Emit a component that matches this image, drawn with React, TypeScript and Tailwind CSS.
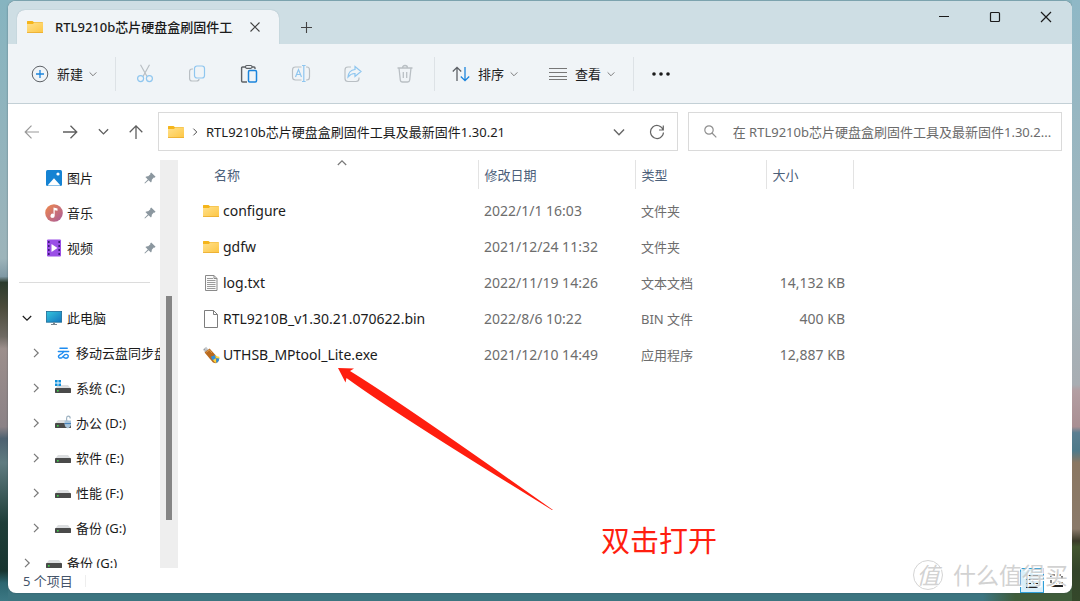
import React, { useState } from 'react';

interface FileItem {
  name: string;
  date: string;
  type: string;
  size: string;
  icon: 'folder' | 'text' | 'blank' | 'usb';
}

const FILES: FileItem[] = [
  { name: 'configure', date: '2022/1/1 16:03', type: '文件夹', size: '', icon: 'folder' },
  { name: 'gdfw', date: '2021/12/24 11:32', type: '文件夹', size: '', icon: 'folder' },
  { name: 'log.txt', date: '2022/11/19 14:26', type: '文本文档', size: '14,132 KB', icon: 'text' },
  { name: 'RTL9210B_v1.30.21.070622.bin', date: '2022/8/6 10:22', type: 'BIN 文件', size: '400 KB', icon: 'blank' },
  { name: 'UTHSB_MPtool_Lite.exe', date: '2021/12/10 14:49', type: '应用程序', size: '12,887 KB', icon: 'usb' },
];

const DRIVES = [
  { name: '移动云盘同步盘', icon: 'cloud' },
  { name: '系统 (C:)', icon: 'system' },
  { name: '办公 (D:)', icon: 'locked' },
  { name: '软件 (E:)', icon: 'drive' },
  { name: '性能 (F:)', icon: 'drive' },
  { name: '备份 (G:)', icon: 'drive' },
];

const FolderIcon = () => (
  <svg width="16" height="16" viewBox="0 0 16 16" className="shrink-0">
    <defs>
      <linearGradient id="folder" x1="0" y1="0" x2="1" y2="1">
        <stop offset="0" stopColor="#ffe08a" />
        <stop offset="1" stopColor="#fdc643" />
      </linearGradient>
    </defs>
    <path d="M0 2.5Q0 2 .5 2H5.5L7 3.3H15.5Q16 3.3 16 4V8H0Z" fill="#f5b51b" />
    <path d="M0 5H5.8L7 4H16V13.5Q16 14 15.5 14H.5Q0 14 0 13.5Z" fill="url(#folder)" />
    <path d="M0 13.2H16V13.5Q16 14 15.5 14H.5Q0 14 0 13.5Z" fill="#e9ab2c" />
  </svg>
);

const FileIcon = ({ kind }: { kind: FileItem['icon'] }) => {
  if (kind === 'folder') return <FolderIcon />;
  if (kind === 'usb') {
    return (
      <svg width="18" height="18" viewBox="0 0 18 18" className="shrink-0">
        <path d="M.8 3.5 4.2.8 7 4.4 3.6 7.2Z" fill="#c4c8cc" />
        <path d="M2.2 3.6l.9-.7M3.5 5.1l.9-.7" stroke="#777" strokeWidth=".8" />
        <path d="M2.6 6.6 7.6 2.5 17 13Q17 15.8 13.6 17.2L11 16.6Z" fill="#b96a1e" />
        <path d="M4.2 6.4 7.4 4 10 7" fill="none" stroke="#dd9a4b" />
        <path d="M9 10.4Q11.4 10.4 13 8.800L14 12.2 11 14.400Q9.200 12.6 9 10.400Z" fill="#2f8fdc" />
        <path d="M13 8.800Q14.600 10.800 17.400 10.800L17.400 13 14 12.500ZM11 14 13.800 12.300 14.600 17.200Q12.400 16.800 11 14Z" fill="#ffd53e" />
        <path d="M14 12.300 17.400 12.600Q17.200 15.600 14.600 17.200Z" fill="#2f8fdc" />
      </svg>
    );
  }
  return (
    <svg width="16" height="18" viewBox="0 0 16 18" className="shrink-0">
      {kind === 'text' ? (
        <>
          <path d="M2.5 1.5H11L14 4.5V16.5H2.5Z" fill="#fafafa" stroke="#8a8a8a" />
          <path d="M11 1.5V4.5H14" fill="none" stroke="#8a8a8a" />
          <path d="M4 4.5h6M4 6.5h8.5M4 8.5h8.5M4 10.5h8.5M4 12.5h8.5M4 14.5h8.5" stroke="#9b9b9b" />
        </>
      ) : (
        <>
          <path d="M1.5.5H10.5L14.5 4.5V17.5H1.5Z" fill="#fff" stroke="#7d7d7d" />
          <path d="M10.5.5V4.5H14.5" fill="none" stroke="#7d7d7d" />
        </>
      )}
    </svg>
  );
};

const DriveIcon = ({ kind }: { kind: string }) => {
  if (kind === 'cloud') {
    return (
      <svg width="16" height="16" viewBox="0 0 16 16" className="shrink-0" fill="none" stroke="#1e8cf0" strokeLinecap="round">
        <path d="M5 3.2H12.200" strokeWidth="1.500" />
        <path d="M3.400 6.400H13.600" strokeWidth="1.500" />
        <path d="M8.600 6.600Q7 9.200 4.800 9.800Q2.800 11 3.800 12.400Q5 13.600 7 12.600Q8.800 11 9.600 9.800Q12.200 8.600 13.200 10.600Q13.600 13 10.800 13.200Q8.800 13 8 11.400" strokeWidth="1.400" />
      </svg>
    );
  }
  return (
    <svg width="16" height="16" viewBox="0 0 16 16" className="shrink-0">
      <path d="M3 5H13L15.8 8.600H.2Z" fill="#dcdee0" />
      <rect x="0" y="8" width="16" height="5" rx=".4" fill="#4a4a4a" />
      <rect x="2" y="10" width="1.600" height="1.600" fill="#3fd44b" />
      {kind === 'system' && <path d="M0 0H2.6V2.6H0ZM3.4 0H6V2.6H3.4ZM0 3.4H2.6V6H0ZM3.4 3.4H6V6H3.4Z" fill="#1090dc" />}
      {kind === 'locked' && (
        <>
          <path d="M11.6 6V3Q11.8 1.2 13.4 1.2Q15.2 1.2 15.2 3.4" fill="none" stroke="#9fb3c2" strokeWidth="1.2" />
          <path d="M9.6 5.6H16V10Q15.4 12.6 12.8 13.4Q10 12.4 9.6 10Z" fill="#a9c4da" />
          <path d="M9.6 8.6H16" stroke="#3f7db8" />
        </>
      )}
    </svg>
  );
};

const Chevron = ({ d, className, size = 10 }: { d: 'down' | 'right' | 'up'; className: string; size?: number }) => (
  <svg width={size} height={size} viewBox="0 0 10 10" className={`shrink-0 ${className}`} fill="none" stroke="currentColor" strokeWidth="1.2">
    <path d={d === 'down' ? 'M.8 3 5 7.2 9.2 3' : d === 'up' ? 'M.8 7 5 2.8 9.2 7' : 'M3 .8 7.2 5 3 9.2'} />
  </svg>
);

const PinIcon = () => (
  <svg width="12" height="12" viewBox="0 0 12 12" className="shrink-0" fill="#8b979f">
    <path d="M7.2.4 11.6 4.8 10.4 5.8 9.8 5.6 7.8 7.8Q8 9.4 7 10.6L4.6 8.2 1 11.6.4 11 3.8 7.4 1.4 5Q2.6 4 4.2 4.2L6.4 2.2 6.2 1.6Z" />
  </svg>
);

const toolIcons = [
  {
    label: '剪切',
    art: (
      <g stroke="#b9bfc4">
        <path d="M5.5.8 12 12.5M14.5.8 8 12.5" />
        <circle cx="5.6" cy="14.6" r="3" stroke="#8fc6ef" />
        <circle cx="14.4" cy="14.6" r="3" stroke="#8fc6ef" />
      </g>
    ),
  },
  {
    label: '复制',
    art: (
      <>
        <path d="M6 5H5Q2.600 5 2.600 7.500V14.500Q2.600 17 5 17H9.500Q12 17 12 15" stroke="#b9bfc4" />
        <rect x="7.500" y="2" width="10" height="12" rx="2.500" stroke="#8fc6ef" />
      </>
    ),
  },
  {
    label: '粘贴',
    art: (
      <>
        <path d="M6.500 3H3.600Q2.600 3 2.600 4V17Q2.600 18 3.600 18H8M13 3H15Q16 3 16 4V5" stroke="#5d6166" strokeWidth="1.400" />
        <rect x="6.500" y="1.500" width="6.500" height="2.800" rx="1.200" stroke="#5d6166" />
        <rect x="9.500" y="6.500" width="8" height="11.500" rx="1.200" stroke="#1b84dc" strokeWidth="1.500" />
      </>
    ),
  },
  {
    label: '重命名',
    art: (
      <>
        <path d="M10.500 3H4.500Q1.500 3 1.500 6V13Q1.500 16 4.500 16H10.500M15 3H16Q18.500 3 18.500 6V13Q18.500 16 16 16H15" stroke="#b9bfc4" />
        <path d="M4.500 13 7.500 5.500 10.500 13M5.500 10.500H9.500M12.800 1.500V17.500M11 1.500H14.600M11 17.500H14.600" stroke="#8fc6ef" />
      </>
    ),
  },
  {
    label: '共享',
    art: (
      <>
        <path d="M8 3H5Q2 3 2 6V14.500Q2 17.500 5 17.500H13Q16 17.500 16 14.500V13.500" stroke="#b9bfc4" />
        <path d="M12 2.500 18 7.500 12 12.500V9.500Q8 9.300 5 13Q5.500 6.300 12 5.500Z" stroke="#8fc6ef" />
      </>
    ),
  },
  {
    label: '删除',
    art: (
      <g stroke="#b9bfc4" strokeWidth="1.300">
        <path d="M2.500 4H17.500M7.500 4Q7.500 1.500 10 1.500T12.500 4M4 4 5.300 16Q5.500 18 7.500 18H12.500Q14.500 18 14.700 16L16 4M8.300 8V14M11.700 8V14" />
      </g>
    ),
  },
];

const TH = 'border-r border-[#e3e3e3] px-1.5 text-left font-normal';

export default function App() {
  const [query, setQuery] = useState('');

  return (
    <div className="relative flex h-screen overflow-hidden bg-[linear-gradient(to_bottom,#8ab5c1_50%,transparent_50%),linear-gradient(to_right,#3c7580_91%,#3f5c3a_94%)] font-['Noto_Sans','Noto_Sans_CJK_SC',sans-serif] text-[13px] leading-5 text-[#1b1b1b]">
      <div className="w-2 shrink-0 bg-[linear-gradient(to_bottom,#86b4c0_0%,#9db4ba_43%,#7f99a5_46%,#2b3a2c_47%,#4a4a3a_51%,#6f6a63_56%,#9c8f8c_58%,#8b8286_71%,#4d6170_73%,#5f7b80_77%,#1f3d38_87%,#183530_95%,#2d6670_97%,#3c7884_100%)]" />

      <div className="flex min-w-0 flex-1 flex-col pt-px pb-2">
        <div className="flex min-h-0 flex-1 flex-col overflow-hidden rounded-lg bg-white shadow-[0_0_2px_#33485099]">
          {/* title bar */}
          <header className="flex h-[43px] shrink-0 items-end bg-[#cedee4] pl-[9px]">
            <div className="flex h-[34px] w-[262px] items-center rounded-t-lg bg-[#f0f4f7] pr-4 pl-2.5 shadow-[0_0_1px_#8aa5b0]">
              <FolderIcon />
              <span className="ml-3 w-[178px] overflow-hidden font-medium whitespace-nowrap">RTL9210b芯片硬盘盒刷固件工具</span>
              <button aria-label="关闭标签页" className="ml-auto flex size-4 items-center justify-center">
                <svg width="10" height="10" viewBox="0 0 10 10" stroke="#444" strokeWidth="1.1"><path d="M.5.5 9.500 9.500M9.500.5.5 9.500" /></svg>
              </button>
            </div>
            <button aria-label="新建标签页" className="ml-[17px] flex h-[34px] w-5 items-center justify-center">
              <svg width="11" height="11" viewBox="0 0 11 11" stroke="#444" strokeWidth="1.1"><path d="M5.500 0V11M0 5.500H11" /></svg>
            </button>
            <div className="ml-auto flex self-start pr-px">
              {[
                ['最小化', 'M1 5.500H11'],
                ['最大化', 'M2.500 1.500H9.500Q10.500 1.500 10.500 2.500V9.500Q10.500 10.500 9.500 10.500H2.500Q1.500 10.500 1.500 9.500V2.500Q1.500 1.500 2.500 1.500Z'],
                ['关闭', 'M1 1 11 11M11 1 1 11'],
              ].map(([label, path]) => (
                <button key={label} aria-label={label} className="flex h-[31px] w-[51px] items-center justify-center">
                  <svg width="12" height="12" viewBox="0 0 12 12" fill="none" stroke="#1b1b1b" strokeWidth="1.200"><path d={path} /></svg>
                </button>
              ))}
            </div>
          </header>

          {/* command bar */}
          <div className="flex h-[60px] shrink-0 items-center border-b border-[#c3d0d6] bg-[#f0f4f7]">
            <button className="flex h-9 w-[107px] items-center pl-[23px]">
              <svg width="18" height="18" viewBox="0 0 18 18" fill="none" stroke="#5d6166">
                <circle cx="9" cy="9" r="7.800" />
                <path d="M9 5V13M5 9H13" stroke="#1b84dc" strokeWidth="1.300" />
              </svg>
              <span className="ml-2">新建</span>
              <Chevron d="down" size={8} className="ml-1.5 text-[#777]" />
            </button>
            <div className="mr-[3px] h-[34px] w-px bg-[#dde2e6]" />
            {toolIcons.map(tool => (
              <button key={tool.label} aria-label={tool.label} className="flex h-9 w-[52px] items-center justify-center">
                <svg width="20" height="20" viewBox="0 0 20 20" fill="none" strokeWidth="1.200">{tool.art}</svg>
              </button>
            ))}
            <div className="ml-[3px] h-[34px] w-px bg-[#dde2e6]" />
            <button className="flex h-9 w-[99px] items-center pl-[17px]">
              <svg width="18" height="18" viewBox="0 0 18 18" fill="none" strokeWidth="1.300">
                <path d="M5 16V2.500M.8 6.500 5 2.300 9.200 6.500" stroke="#5d6166" />
                <path d="M13 2V15.500M8.800 11.500 13 15.700 17.200 11.500" stroke="#1b84dc" />
              </svg>
              <span className="ml-2">排序</span>
              <Chevron d="down" size={8} className="ml-1.5 text-[#777]" />
            </button>
            <button className="flex h-9 w-[99px] items-center pl-[15px]">
              <svg width="18" height="18" viewBox="0 0 18 18" stroke="#777" strokeWidth="1.200"><path d="M0 3.500H18M0 7.500H18M0 11.500H18M0 14.500H18" /></svg>
              <span className="ml-2">查看</span>
              <Chevron d="down" size={8} className="ml-1.5 text-[#777]" />
            </button>
            <div className="h-[34px] w-px bg-[#dde2e6]" />
            <button aria-label="更多" className="flex h-9 w-[54px] items-center justify-center">
              <svg width="18" height="4" viewBox="0 0 18 4" fill="#1b1b1b"><circle cx="2" cy="2" r="1.800" /><circle cx="9" cy="2" r="1.800" /><circle cx="16" cy="2" r="1.800" /></svg>
            </button>
          </div>

          {/* navigation */}
          <div className="flex h-[55px] shrink-0 items-center pr-2.5">
            <div className="flex w-[150px] shrink-0 items-center pl-4 text-[#5f5f5f]">
              <button aria-label="后退" className="text-[#999]">
                <svg width="15" height="14" viewBox="0 0 15 14" fill="none" stroke="currentColor" strokeWidth="1.200"><path d="M15 7H1M7.500.7 1.200 7 7.500 13.300" /></svg>
              </button>
              <button aria-label="前进" className="ml-6">
                <svg width="15" height="14" viewBox="0 0 15 14" fill="none" stroke="currentColor" strokeWidth="1.300"><path d="M0 7H14M7.500.7 13.800 7 7.500 13.300" /></svg>
              </button>
              <button aria-label="最近浏览的位置" className="ml-5"><Chevron d="down" size={11} className="text-[#5f5f5f]" /></button>
              <button aria-label="向上" className="ml-5">
                <svg width="14" height="14" viewBox="0 0 14 14" fill="none" stroke="currentColor" strokeWidth="1.300"><path d="M7 14V1M.7 7.200 7 .9 13.300 7.200" /></svg>
              </button>
            </div>
            <div className="flex h-[39px] min-w-0 flex-[520] items-center border border-[#dadada] pr-3 pl-[9px]">
              <FolderIcon />
              <Chevron d="right" size={8} className="mx-[7px] text-[#444]" />
              <button className="truncate">RTL9210b芯片硬盘盒刷固件工具及最新固件1.30.21</button>
              <button aria-label="上一个位置" className="ml-auto"><Chevron d="down" size={12} className="text-[#666]" /></button>
              <button aria-label="刷新" className="ml-6">
                <svg width="16" height="16" viewBox="0 0 16 16" fill="none" stroke="#666" strokeWidth="1.200"><path d="M14.200 6A6.500 6.500 0 1 0 14.500 8.500M14.300 1.500V6H10" /></svg>
              </button>
            </div>
            <label className="ml-2.5 flex h-[39px] min-w-0 flex-[374] items-center border border-[#dadada] pl-[15px]">
              <svg width="13" height="13" viewBox="0 0 13 13" fill="none" stroke="#8f8f8f" strokeWidth="1.200"><circle cx="5" cy="5" r="4.200" /><path d="M8 8 12.300 12.300" /></svg>
              <input
                type="text"
                aria-label="搜索"
                value={query}
                onChange={e => setQuery(e.target.value)}
                placeholder="在 RTL9210b芯片硬盘盒刷固件工具及最新固件1.30.2..."
                className="ml-4 min-w-0 flex-1 outline-none placeholder:text-[#6b6b6b]"
              />
            </label>
          </div>

          <div className="flex min-h-0 flex-1 pt-px">
            {/* sidebar */}
            <nav className="w-[152px] shrink-0 overflow-hidden whitespace-nowrap text-[#1b1b1b]">
              <a href="#pictures" className="flex h-[35px] items-center pr-1 pl-[38px]">
                <svg width="16" height="16" viewBox="0 0 16 16"><rect width="16" height="16" rx="1.500" fill="#1583d3" /><path d="M1.500 15.500 8 8.200 14.500 15.500Z" fill="#fff" /><circle cx="12" cy="4" r="1.600" fill="#fff" /></svg>
                <span className="mr-auto ml-[5px]">图片</span>
                <PinIcon />
              </a>
              <a href="#music" className="flex h-[35px] items-center pr-1 pl-[37px]">
                <svg width="18" height="18" viewBox="0 0 18 18">
                  <defs><linearGradient id="music" x1="0" y1="0" x2="1" y2="1"><stop offset="0" stopColor="#f08a4b" /><stop offset="1" stopColor="#a85a9c" /></linearGradient></defs>
                  <circle cx="9" cy="9" r="8.800" fill="url(#music)" />
                  <path d="M8.500 3.500 12.500 4.500V6.800L9.700 6.200V11.800A2.100 2.100 0 1 1 8.500 9.900Z" fill="#fff" />
                </svg>
                <span className="mr-auto ml-1">音乐</span>
                <PinIcon />
              </a>
              <a href="#videos" className="flex h-[35px] items-center pr-1 pl-[38px]">
                <svg width="16" height="18" viewBox="0 0 16 18">
                  <rect x="1" y=".5" width="14" height="17" rx="1" fill="#9a4fe6" />
                  <path d="M2.800 2V16.500M13.200 2V16.500" stroke="#3d1a78" strokeWidth="1.600" strokeDasharray="2 2" />
                  <path d="M5.500 5 11.500 9 5.500 13Z" fill="#fff" />
                </svg>
                <span className="mr-auto ml-[5px]">视频</span>
                <PinIcon />
              </a>
              <div className="flex h-[35px] items-center pr-2.5 pl-[11px]"><hr className="w-full border-[#dcdcdc]" /></div>
              <a href="#pc" className="flex h-[35px] items-center pl-3.5">
                <Chevron d="down" className="text-[#1b1b1b]" />
                <svg width="16" height="16" viewBox="0 0 16 16" className="ml-3.5">
                  <defs><linearGradient id="screen" x1="0" y1="0" x2="1" y2="1"><stop offset="0" stopColor="#35c6dc" /><stop offset="1" stopColor="#1474bf" /></linearGradient></defs>
                  <rect x=".4" y="1.400" width="15.200" height="10.800" fill="url(#screen)" stroke="#1d6b96" strokeWidth=".8" />
                  <path d="M7 12.500H9V14H11V15H5V14H7Z" fill="#7b8790" />
                </svg>
                <span className="ml-[5px]">此电脑</span>
              </a>
              {DRIVES.map(drive => (
                <a key={drive.name} href="#drive" className="flex h-[35px] items-center pl-[23px]">
                  <Chevron d="right" className="text-[#777]" />
                  <span className="ml-3.5"><DriveIcon kind={drive.icon} /></span>
                  <span className="ml-[5px]">{drive.name}</span>
                </a>
              ))}
              <a href="#backup" className="flex h-[35px] items-center pl-3.5">
                <Chevron d="right" className="text-[#777]" />
                <span className="ml-3.5"><DriveIcon kind="drive" /></span>
                <span className="ml-[5px]">备份 (G:)</span>
              </a>
            </nav>
            <div className="flex w-[18px] shrink-0 flex-col items-center bg-[#eeeeee]">
              <div className="flex-[136]" />
              <div className="w-1.5 flex-[224] bg-[#858585]" />
              <div className="flex-[48]" />
            </div>

            {/* file list */}
            <main className="relative min-w-0 flex-1 pl-[18px]">
              <table className="w-[657px] table-fixed border-collapse">
                <colgroup>
                  <col className="w-[282px]" />
                  <col className="w-[157px]" />
                  <col className="w-[131px]" />
                  <col className="w-[87px]" />
                </colgroup>
                <thead className="text-[#4c607a]">
                  <tr className="h-[29px]">
                    <th className="relative border-r border-[#e3e3e3] pl-[18px] text-left font-normal">
                      名称
                      <Chevron d="up" className="absolute -top-0.5 left-1/2 text-[#777]" />
                    </th>
                    <th className={TH}>修改日期</th>
                    <th className={TH}>类型</th>
                    <th className={TH}>大小</th>
                  </tr>
                </thead>
                <tbody className="text-[#6d6d6d] before:block before:h-1">
                  {FILES.map(file => (
                    <tr key={file.name} className="h-9">
                      <td className="text-sm text-[#1b1b1b]">
                        <div className="flex items-center pl-1.5">
                          <span className="flex w-[18px] shrink-0 justify-center"><FileIcon kind={file.icon} /></span>
                          <span className="ml-[3px] whitespace-nowrap">{file.name}</span>
                        </div>
                      </td>
                      <td className="px-1.5 text-sm whitespace-nowrap">{file.date}</td>
                      <td className="px-1.5">{file.type}</td>
                      <td className="pr-2 text-right text-sm whitespace-nowrap">{file.size}</td>
                    </tr>
                  ))}
                </tbody>
              </table>

              <svg width="220" height="145" viewBox="0 0 220 145" className="absolute top-[208px] left-[160px]">
                <path d="M0 0 16 .5 12 3Q64 35 215 142L214 142Q56 45 8.500 10L7.500 14.500Z" fill="#ff1e0f" />
              </svg>
              <p className="absolute top-[361px] left-[423px] text-[29px] leading-10 whitespace-nowrap text-[#ff1e0f]">双击打开</p>
            </main>
          </div>

          {/* status bar */}
          <footer className="flex h-[25px] shrink-0 items-center pr-1 pl-[15px] text-[#44546a]">
            <span>5 个项目</span>
            <div className="ml-3 h-3 w-px bg-[#eeeeee]" />
            <button aria-label="详细信息" className="ml-auto flex h-[25px] w-6 items-center justify-center border border-[#2f9fd8] bg-[#d9effa]">
              <svg width="12" height="14" viewBox="0 0 12 14" stroke="#222" strokeWidth="1.200"><path d="M0 1.500H5M7 1.500H12M0 5.500H5M7 5.500H12M0 9.500H5M7 9.500H12M0 13.400H12" /></svg>
            </button>
            <button aria-label="大图标" className="flex h-[25px] w-6 items-center justify-center">
              <svg width="13" height="13" viewBox="0 0 13 13" fill="none" stroke="#222" strokeWidth="1.200"><rect x="1" y="1" width="11" height="8" strokeDasharray="4 2" /><path d="M0 12H13" strokeWidth="2" /></svg>
            </button>
          </footer>
        </div>
      </div>

      <div className="w-2 shrink-0 bg-[linear-gradient(to_bottom,#8fb8c6_0%,#a5b5bb_50%,#a8adb2_64%,#b39ea2_65%,#a98f93_71%,#5a7f92_72%,#4f7a8a_75%,#8a7762_77%,#8a7a6a_88%,#3a3a28_90%,#42552f_91%,#33442a_95%,#34482a_100%)]" />

      {/* watermark */}
      <div className="pointer-events-none absolute right-3 bottom-2.5 flex items-center gap-2.5 text-[#c6c6c6]/80 [text-shadow:1px_1px_0_#fff]">
        <div className="flex size-[30px] items-center justify-center rounded-full border border-[#d4d4d4] text-[23px] italic">值</div>
        <span className="text-[23px] leading-8 whitespace-nowrap">什么值得买</span>
      </div>
    </div>
  );
}
